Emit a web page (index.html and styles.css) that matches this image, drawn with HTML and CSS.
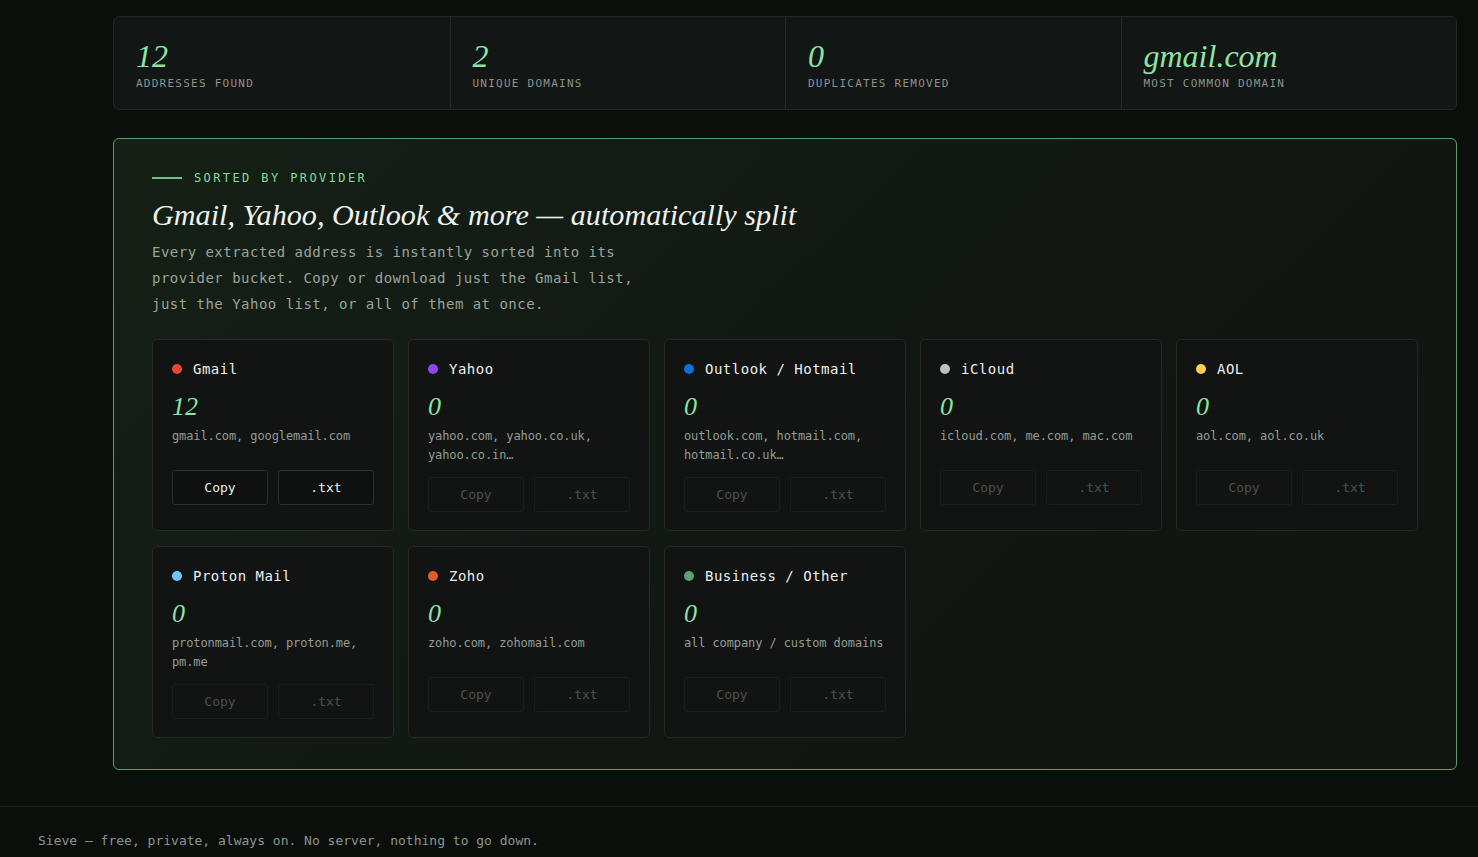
FILE: index.html
```html
<!DOCTYPE html>
<html lang="en">
<head>
    <meta charset="UTF-8">
    <meta name="viewport" content="width=device-width, initial-scale=1.0">
    <title>Sieve</title>
    <link rel="stylesheet" href="styles.css">
</head>
<body>

<main class="page">
    <section class="stats">
        <div class="stat">
            <div class="stat-num">12</div>
            <div class="stat-label">Addresses found</div>
        </div>
        <div class="stat">
            <div class="stat-num">2</div>
            <div class="stat-label">Unique domains</div>
        </div>
        <div class="stat">
            <div class="stat-num">0</div>
            <div class="stat-label">Duplicates removed</div>
        </div>
        <div class="stat">
            <div class="stat-num">gmail.com</div>
            <div class="stat-label">Most common domain</div>
        </div>
    </section>

    <section class="providers">
        <div class="eyebrow"><span class="rule"></span>Sorted by provider</div>
        <h2>Gmail, Yahoo, Outlook &amp; more — automatically split</h2>
        <p class="lead">Every extracted address is instantly sorted into its provider bucket. Copy or download just the Gmail list, just the Yahoo list, or all of them at once.</p>

        <div class="grid">
            <div class="card">
                <div class="card-name"><span class="dot gmail"></span>Gmail</div>
                <div class="card-count">12</div>
                <div class="card-domains">gmail.com, googlemail.com</div>
                <div class="card-actions">
                    <button>Copy</button>
                    <button>.txt</button>
                </div>
            </div>
            <div class="card">
                <div class="card-name"><span class="dot yahoo"></span>Yahoo</div>
                <div class="card-count">0</div>
                <div class="card-domains">yahoo.com, yahoo.co.uk, yahoo.co.in…</div>
                <div class="card-actions">
                    <button disabled>Copy</button>
                    <button disabled>.txt</button>
                </div>
            </div>
            <div class="card">
                <div class="card-name"><span class="dot outlook"></span>Outlook / Hotmail</div>
                <div class="card-count">0</div>
                <div class="card-domains">outlook.com, hotmail.com, hotmail.co.uk…</div>
                <div class="card-actions">
                    <button disabled>Copy</button>
                    <button disabled>.txt</button>
                </div>
            </div>
            <div class="card">
                <div class="card-name"><span class="dot icloud"></span>iCloud</div>
                <div class="card-count">0</div>
                <div class="card-domains">icloud.com, me.com, mac.com</div>
                <div class="card-actions">
                    <button disabled>Copy</button>
                    <button disabled>.txt</button>
                </div>
            </div>
            <div class="card">
                <div class="card-name"><span class="dot aol"></span>AOL</div>
                <div class="card-count">0</div>
                <div class="card-domains">aol.com, aol.co.uk</div>
                <div class="card-actions">
                    <button disabled>Copy</button>
                    <button disabled>.txt</button>
                </div>
            </div>
            <div class="card">
                <div class="card-name"><span class="dot proton"></span>Proton Mail</div>
                <div class="card-count">0</div>
                <div class="card-domains">protonmail.com, proton.me, pm.me</div>
                <div class="card-actions">
                    <button disabled>Copy</button>
                    <button disabled>.txt</button>
                </div>
            </div>
            <div class="card">
                <div class="card-name"><span class="dot zoho"></span>Zoho</div>
                <div class="card-count">0</div>
                <div class="card-domains">zoho.com, zohomail.com</div>
                <div class="card-actions">
                    <button disabled>Copy</button>
                    <button disabled>.txt</button>
                </div>
            </div>
            <div class="card">
                <div class="card-name"><span class="dot business"></span>Business / Other</div>
                <div class="card-count">0</div>
                <div class="card-domains">all company / custom domains</div>
                <div class="card-actions">
                    <button disabled>Copy</button>
                    <button disabled>.txt</button>
                </div>
            </div>
        </div>
    </section>
</main>

<footer class="site-footer">
    Sieve — free, private, always on. No server, nothing to go down.
</footer>

</body>
</html>
```

FILE: styles.css
```css
body {
    margin: 0;
    background: #0b0f0c;
    color: #e6ebe7;
    font-family: "DejaVu Sans Mono", monospace;
}

.page { margin: 0 21px 0 113px; padding-top: 16px; }

/* stats strip */
.stats {
    display: grid;
    grid-template-columns: repeat(4, 1fr);
    background: #121614;
    border: 1px solid #222824;
    border-radius: 6px;
}
.stat { padding: 24px 22px 19px; border-left: 1px solid #252b27; }
.stat:first-child { border-left: none; }
.stat-num {
    font-family: "Liberation Serif", serif;
    font-style: italic;
    font-size: 32px;
    line-height: 30px;
    color: #8fe3a2;
}
.stat-label {
    margin-top: 6px;
    font-size: 11px;
    line-height: 13px;
    letter-spacing: 1.25px;
    text-transform: uppercase;
    color: #8a938c;
}

/* providers panel */
.providers {
    margin-top: 28px;
    padding: 31px 38px 31px;
    border: 1px solid #5c9e6b;
    border-radius: 6px;
    background: linear-gradient(135deg, #142016 0%, #121713 55%, #111512 100%);
}
.eyebrow {
    display: flex;
    align-items: center;
    font-size: 12px;
    line-height: 16px;
    letter-spacing: 2.4px;
    text-transform: uppercase;
    color: #84dc9a;
}
.eyebrow .rule { width: 30px; height: 2px; background: #6cc283; margin-right: 12px; }
.providers h2 {
    margin: 11px 0 6px;
    font-family: "Liberation Serif", serif;
    font-style: italic;
    font-weight: normal;
    font-size: 30.2px;
    line-height: 36px;
    color: #eef2ef;
}
.lead {
    margin: 0;
    max-width: 500px;
    font-size: 14px;
    line-height: 26px;
    letter-spacing: 0.48px;
    color: #9aa39c;
}

.grid {
    display: grid;
    grid-template-columns: repeat(5, 1fr);
    gap: 15px 14px;
    margin-top: 22px;
}
.card {
    background: #111412;
    border: 1px solid #232a25;
    border-radius: 5px;
    padding: 20px 19px 18px;
}
.card-name {
    display: flex;
    align-items: center;
    font-size: 14px;
    line-height: 18px;
    letter-spacing: 0.5px;
    color: #eceeed;
}
.dot { width: 10px; height: 10px; border-radius: 50%; margin-right: 11px; }
.dot.gmail { background: #ea4335; }
.dot.yahoo { background: #8f45f0; }
.dot.outlook { background: #0b72d4; }
.dot.icloud { background: #bfc0bf; }
.dot.aol { background: #ffcf4f; }
.dot.proton { background: #6ec5ff; }
.dot.zoho { background: #e55a2b; }
.dot.business { background: #5f9f6d; }

.card-count {
    margin-top: 14px;
    font-family: "Liberation Serif", serif;
    font-style: italic;
    font-size: 26px;
    line-height: 30px;
    color: #8fe3a2;
}
.card-domains {
    margin-top: 5px;
    min-height: 31px;
    font-size: 12px;
    line-height: 19px;
    letter-spacing: -0.1px;
    color: #939c95;
}
.card-actions { display: flex; gap: 10px; margin-top: 12px; }
.card-actions button {
    flex: 1;
    height: 35px;
    background: #0e110f;
    border: 1px solid #2a302c;
    border-radius: 3px;
    color: #eceeed;
    font-family: "DejaVu Sans Mono", monospace;
    font-size: 13px;
    cursor: pointer;
}
.card-actions button:disabled {
    background: #111412;
    border-color: #1b201c;
    color: #4b514d;
    cursor: default;
}

.site-footer {
    margin-top: 36px;
    border-top: 1px solid #1f2421;
    padding: 26px 38px 12px;
    font-size: 13px;
    line-height: 16px;
    color: #8b948d;
}
```
